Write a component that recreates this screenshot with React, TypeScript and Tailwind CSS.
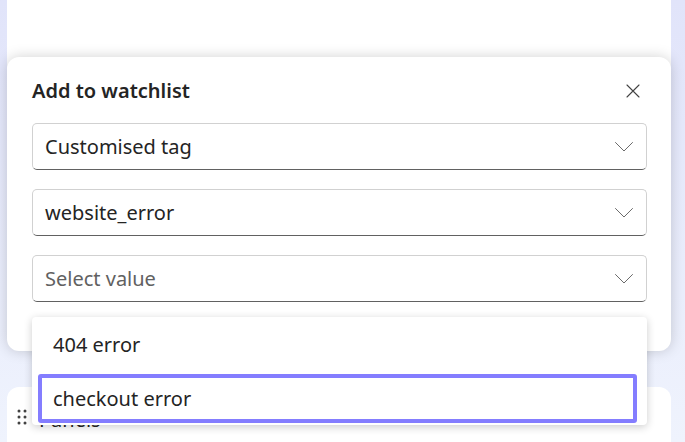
import React from "react";

const font = { fontFamily: '"Segoe UI", "Noto Sans", "Open Sans", sans-serif' };

function Chevron() {
  return (
    <svg width="20" height="12" viewBox="0 0 20 12" fill="none">
      <path d="M1.5 1.5 L10 10 L18.5 1.5" stroke="#6b6b6b" strokeWidth="1" strokeLinecap="round" strokeLinejoin="round" />
    </svg>
  );
}

function SelectBox({ text, placeholder }: { text: string; placeholder?: boolean }) {
  return (
    <div className="h-[47px] w-full rounded-[5px] border border-[#d1d1d1] border-b-[#616161] bg-white flex items-center justify-between pl-3 pr-3">
      <span className={`text-[20px] leading-none ${placeholder ? "text-[#616161]" : "text-[#242424]"}`}>{text}</span>
      <Chevron />
    </div>
  );
}

export default function App() {
  return (
    <div
      className="relative w-[685px] h-[442px] overflow-hidden bg-gradient-to-b from-[#e1e4fa] to-[#eff3fd] px-[7px] flex flex-col"
      style={font}
    >
      {/* underlying page card */}
      <div className="w-[664px] h-[330px] bg-white rounded-b-[12px] shrink-0" />
      <div className="mt-[57px] w-[664px] flex-1 bg-white rounded-t-[12px] flex items-start pt-[22px] pl-[10px] gap-[12px]">
        <svg width="10" height="16" viewBox="0 0 10 16">
          {[0, 1, 2].map((r) =>
            [0, 1].map((c) => <circle key={`${r}${c}`} cx={2 + c * 6} cy={2 + r * 6} r="1.5" fill="#424242" />)
          )}
        </svg>
        <span className="text-[20px] text-[#242424] leading-none mt-[1px]">Panels</span>
      </div>

      {/* popover */}
      <div className="absolute left-[7px] top-[57px] w-[664px] h-[294px] bg-white rounded-[12px] shadow-[0_0_14px_rgba(0,0,0,0.18)] pl-[25px] pr-[24px] pt-[22px]">
        <div className="flex items-center justify-between h-[24px]">
          <span className="text-[20px] font-semibold text-[#242424] leading-none">Add to watchlist</span>
          <svg width="14" height="14" viewBox="0 0 14 14" className="mr-[7px]">
            <path d="M1 1 L13 13 M13 1 L1 13" stroke="#424242" strokeWidth="1.1" strokeLinecap="round" />
          </svg>
        </div>
        <div className="mt-[20px] flex flex-col gap-[19px]">
          <SelectBox text="Customised tag" />
          <SelectBox text="website_error" />
          <SelectBox text="Select value" placeholder />
        </div>
      </div>

      {/* listbox */}
      <div className="absolute left-[32px] top-[317px] w-[615px] h-[108px] bg-white rounded-[4px] shadow-[0_2px_8px_rgba(0,0,0,0.2)] pt-[4px] pl-[6px] pr-[10px]">
        <div className="h-[48px] flex items-center pl-[15px] text-[20px] text-[#242424] leading-none">404 error</div>
        <div className="h-[49px] mt-[5px] border-[4px] border-[#847dff] rounded-[3px] flex items-center pl-[11px] text-[20px] text-[#242424] leading-none">
          checkout error
        </div>
      </div>
    </div>
  );
}
